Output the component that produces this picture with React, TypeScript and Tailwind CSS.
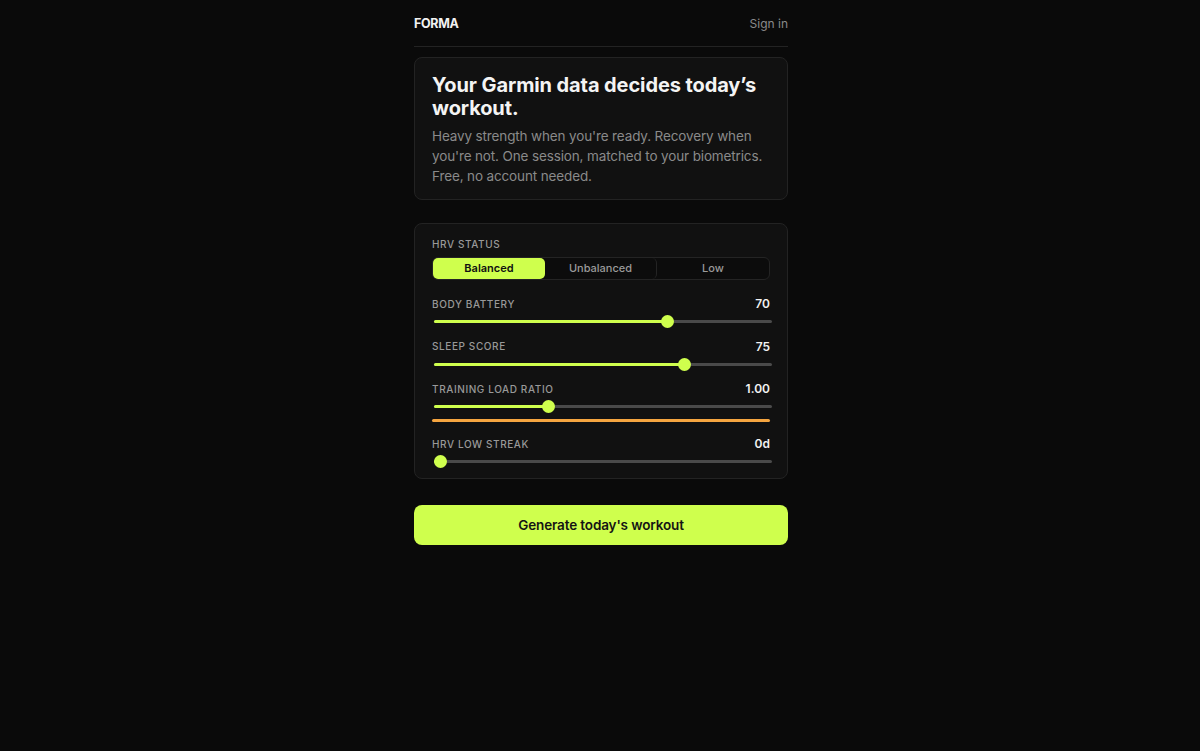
import React from "react";

const ACCENT = "bg-[#cfff4d]";

function Slider({ label, value, pct }: { label: string; value: string; pct: number }) {
  return (
    <div>
      <div className="flex items-center justify-between h-[14px]">
        <span className="text-[10px] tracking-[0.06em] text-[#999999] font-medium">{label}</span>
        <span className="text-[12px] font-semibold text-[#f2f2f2]">{value}</span>
      </div>
      <div className="relative mt-[4px] h-[13px] ml-[2px] mr-[-2px]">
        <div className="absolute left-0 right-0 top-[5px] h-[3px] rounded-full bg-[#4a4a4a]" />
        <div
          className={`absolute left-0 top-[5px] h-[3px] rounded-full ${ACCENT}`}
          style={{ width: `calc(6.5px + (100% - 13px) * ${pct})` }}
        />
        <div
          className={`absolute top-0 h-[13px] w-[13px] rounded-full ${ACCENT}`}
          style={{ left: `calc((100% - 13px) * ${pct})` }}
        />
      </div>
    </div>
  );
}

export default function App() {
  return (
    <div
      className="min-h-[751px] bg-[#0a0a0a] text-white pl-[2px]"
      style={{ fontFamily: "Inter, 'Liberation Sans', sans-serif" }}
    >
      <div className="mx-auto w-[374px]">
        <header className="flex h-[47px] pt-[2px] items-center justify-between border-b border-[#232323]">
          <span className="text-[12.5px] font-bold tracking-tight text-[#f2f2f2]">FORMA</span>
          <span className="text-[12px] text-[#8a8a8a]">Sign in</span>
        </header>

        <section className="mt-[10px] rounded-lg border border-[#232323] bg-[#111111] px-[17px] pt-[16px] pb-[13px]">
          <h1 className="text-[20px] font-bold leading-[23px] tracking-[-0.005em] text-[#f4f4f4]">
            Your Garmin data decides today’s workout.
          </h1>
          <p className="mt-[6px] text-[13.5px] tracking-[-0.01em] leading-[20px] text-[#8a8a8a]">
            Heavy strength when you're ready. Recovery when you're not. One session, matched to your
            biometrics. Free, no account needed.
          </p>
        </section>

        <section className="mt-[23px] rounded-lg border border-[#232323] bg-[#111111] px-[17px] pt-[13px] pb-[10px]">
          <div className="text-[10px] tracking-[0.06em] text-[#999999] font-medium h-[14px] leading-[14px]">
            HRV STATUS
          </div>
          <div className="mt-[6px] grid grid-cols-3 rounded-md border border-[#242424] bg-[#0c0c0c] text-[11px] h-[23px]">
            <button className={`rounded-[5px] ${ACCENT} font-semibold text-[#111]`}>Balanced</button>
            <button className="rounded-[5px] border-r border-[#242424] text-[#9a9a9a] font-medium">Unbalanced</button>
            <button className="text-[#9a9a9a] font-medium">Low</button>
          </div>

          <div className="mt-[17px] flex flex-col gap-[11.5px]">
            <Slider label="BODY BATTERY" value="70" pct={0.7} />
            <Slider label="SLEEP SCORE" value="75" pct={0.75} />
            <div>
              <Slider label="TRAINING LOAD RATIO" value="1.00" pct={0.333} />
              <div className="mt-[6px] h-[3px] rounded-full bg-[#f5a540]" />
            </div>
            <div className="mt-[3.5px]">
              <Slider label="HRV LOW STREAK" value="0d" pct={0} />
            </div>
          </div>
        </section>

        <button className={`mt-[26px] h-[40px] w-full rounded-lg ${ACCENT} text-[13.5px] tracking-[-0.01em] font-semibold text-[#141414]`}>
          Generate today's workout
        </button>
      </div>
    </div>
  );
}
